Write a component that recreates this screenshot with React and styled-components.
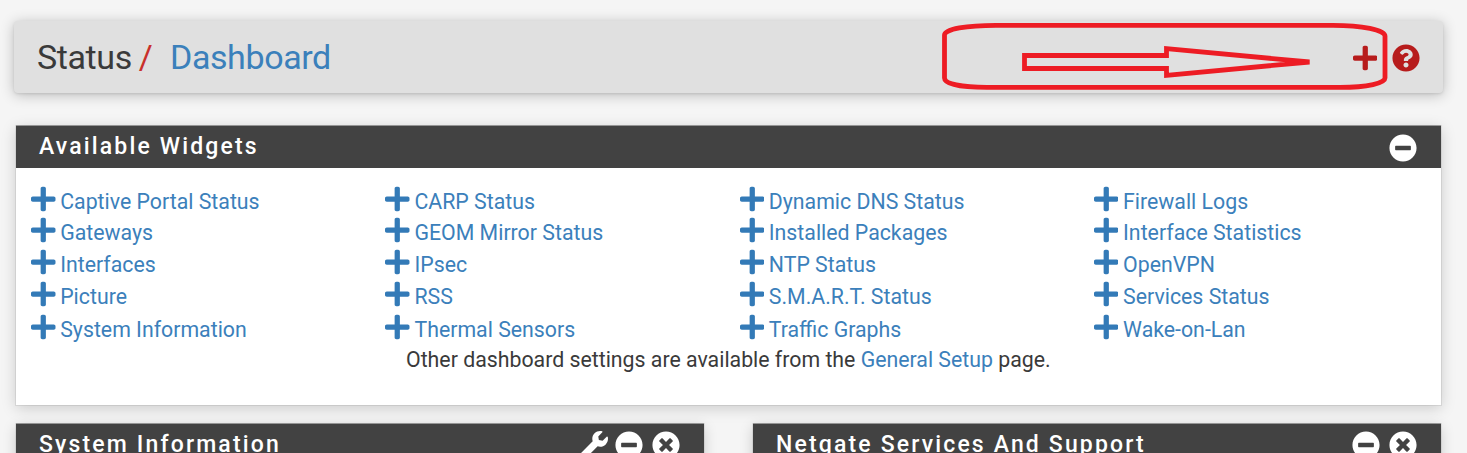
import React from "react";
import styled, { createGlobalStyle } from "styled-components";
import {
  FaPlus,
  FaQuestionCircle,
  FaMinusCircle,
  FaTimesCircle,
  FaWrench,
} from "react-icons/fa";

const GlobalStyle = createGlobalStyle`
  *, *::before, *::after { box-sizing: border-box; }
  html, body { margin: 0; height: 100%; overflow: hidden; }
  body {
    background: #f5f5f5;
    color: #3a3a3a;
    font-family: Roboto, "Liberation Sans", sans-serif;
    font-size: 21.3px;
  }
`;

const Page = styled.main`
  position: relative;
  height: 453px;
  padding: 21px 26px 0 14px;
  overflow: hidden;
`;

const TitleBar = styled.header`
  display: flex;
  align-items: center;
  justify-content: space-between;
  height: 72.4px;
  margin-right: -2px;
  padding: 0 23px;
  border-radius: 4px;
  background: #e0e0e0;
  box-shadow: 0 2px 14px rgba(0, 0, 0, 0.24), 0 1px 3px rgba(0, 0, 0, 0.1);
`;

const Breadcrumb = styled.h1`
  display: flex;
  margin: 0 0 1px;
  font-size: 34px;
  font-weight: 400;
  line-height: 40px;
  letter-spacing: -0.4px;
`;

const Slash = styled.span`
  margin: 0 17.5px 0 7px;
  color: #c9302c;
`;

const Link = styled.a`
  color: #3b80bb;
  text-decoration: none;
`;

const TitleActions = styled.nav`
  display: flex;
  gap: 15px;
  margin-top: 2px;
  color: #b71c1c;
  font-size: 28px;

  svg { display: block; }
  svg:first-child { width: 24.5px; }
`;

const Panel = styled.section`
  background: #fff;
  box-shadow: 0 0 0 1px rgba(0, 0, 0, 0.07), 0 3px 14px rgba(0, 0, 0, 0.18);
`;

const PanelHeading = styled.div`
  display: flex;
  align-items: center;
  justify-content: space-between;
  height: 42px;
  padding: 0 24px 0 23px;
  background: #424242;
  box-shadow: 0 -1px 0 rgba(0, 0, 0, 0.3);
  color: #fff;
`;

const PanelTitle = styled.h2`
  margin: 0;
  font-size: 23px;
  font-weight: 500;
  line-height: 30px;
  letter-spacing: 2.15px;
`;

const PanelActions = styled.div`
  display: flex;
  gap: 9px;
  margin-top: ${(p) => (p.$raised ? "0" : "2px")};
  font-size: 28px;

  svg { display: block; }
  svg:nth-last-child(3) { margin-right: -2px; }
`;

const AvailablePanel = styled(Panel)`
  height: 279px;
  margin: 32.6px 0 0 2px;
`;

const WidgetGrid = styled.ul`
  display: grid;
  grid-template-columns: repeat(4, 354.3px);
  grid-template-rows: 30.7px repeat(4, 32.3px);
  margin: 0;
  padding: 16px 0 0 15px;
  list-style: none;
`;

const WidgetItem = styled.li`
  display: flex;
  gap: 4.7px;
  color: #337ab7;
  line-height: 36px;

  svg { width: 24.5px; height: 28px; margin-top: 1px; }
`;

const SettingsNote = styled.p`
  margin: 0;
  padding-left: 390px;
  line-height: 32px;
`;

const Columns = styled.div`
  display: grid;
  grid-template-columns: 688px 688px;
  justify-content: space-between;
  margin: 19px 0 0 2px;
`;

const Annotation = styled.svg`
  position: absolute;
  left: 940px;
  top: 20px;
  pointer-events: none;
`;

const widgets = [
  "Captive Portal Status", "CARP Status", "Dynamic DNS Status", "Firewall Logs",
  "Gateways", "GEOM Mirror Status", "Installed Packages", "Interface Statistics",
  "Interfaces", "IPsec", "NTP Status", "OpenVPN",
  "Picture", "RSS", "S.M.A.R.T. Status", "Services Status",
  "System Information", "Thermal Sensors", "Traffic Graphs", "Wake-on-Lan",
];

function Heading({ title, raised, children }) {
  return (
    <PanelHeading>
      <PanelTitle>{title}</PanelTitle>
      <PanelActions $raised={raised}>{children}</PanelActions>
    </PanelHeading>
  );
}

export default function App() {
  return (
    <>
      <GlobalStyle />
      <Page>
        <TitleBar>
          <Breadcrumb>
            <span>Status</span>
            <Slash>/</Slash>
            <Link>Dashboard</Link>
          </Breadcrumb>
          <TitleActions>
            <FaPlus />
            <FaQuestionCircle />
          </TitleActions>
        </TitleBar>

        <AvailablePanel>
          <Heading title="Available Widgets">
            <FaMinusCircle />
          </Heading>
          <WidgetGrid>
            {widgets.map((name) => (
              <WidgetItem key={name}>
                <FaPlus />
                <Link>{name}</Link>
              </WidgetItem>
            ))}
          </WidgetGrid>
          <SettingsNote>
            Other dashboard settings are available from the <Link>General Setup</Link> page.
          </SettingsNote>
        </AvailablePanel>

        <Columns>
          <Panel>
            <Heading title="System Information" raised>
              <FaWrench />
              <FaMinusCircle />
              <FaTimesCircle />
            </Heading>
          </Panel>
          <Panel>
            <Heading title="Netgate Services And Support" raised>
              <FaMinusCircle />
              <FaTimesCircle />
            </Heading>
          </Panel>
        </Columns>

        <Annotation width="450" height="74" viewBox="940 20 450 74" fill="none" stroke="#ed1c24" strokeWidth="4.8" strokeLinejoin="round">
          <path d="M996 25.3H1333C1362 25.3 1385 30 1385 36V78C1385 83 1368 87.4 1340 87.4H987C962 87.4 944.5 84 944.5 78V35C944.5 29 967 25.3 996 25.3Z" />
          <path strokeLinejoin="miter" strokeMiterlimit="2" d="M1024.5 55.5H1166.5V48.7L1309.5 62L1166.5 75.3V68.5H1024.5Z" />
        </Annotation>
      </Page>
    </>
  );
}
